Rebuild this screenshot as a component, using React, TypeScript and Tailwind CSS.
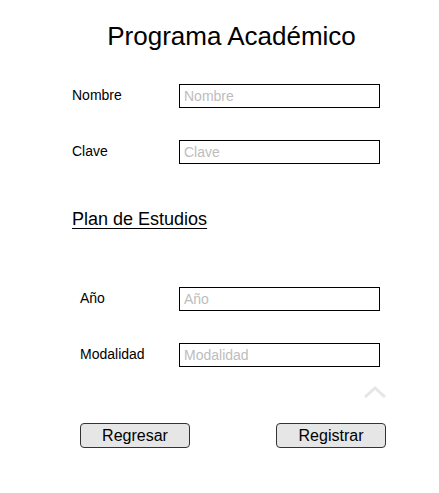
import React from 'react';

const Field = ({ label, indent }: { label: string; indent?: boolean }) => (
  <div className="flex items-start">
    <label className={`w-[107px] text-[14px] leading-4 pt-[3px] text-black ${indent ? 'pl-2' : ''}`}>{label}</label>
    <input
      className="w-[201px] h-[24px] border border-black px-1 text-[14px] outline-none placeholder:text-[#bdbdbd]"
      placeholder={label}
    />
  </div>
);

export default function App() {
  return (
    <div className="w-[439px] h-[493px] bg-white font-['Liberation_Sans',Arial,sans-serif] text-black">
      <h1 className="pt-[21px] text-center text-[26px] leading-[30px] pl-[24px]">Programa Académico</h1>

      <div className="pl-[72px] pt-[33px] flex flex-col">
        <div className="flex flex-col gap-[32px]">
          <Field label="Nombre" />
          <Field label="Clave" />
        </div>

        <h2 className="mt-[44px] text-[18px] leading-[22px] underline underline-offset-[3px] w-fit">Plan de Estudios</h2>

        <div className="mt-[57px] flex flex-col gap-[32px]">
          <Field label="Año" indent />
          <Field label="Modalidad" indent />
        </div>

        <div className="flex justify-end w-[314px] mt-[19px]">
          <svg width="22" height="12" viewBox="0 0 22 12" fill="none">
            <path d="M1 11 L11 2 L21 11" stroke="#e6e6e6" strokeWidth="3" />
          </svg>
        </div>

        <div className="flex justify-between w-[314px] pl-2 mt-[25px]">
          <button className="w-[110px] h-[25px] bg-[#e6e6e6] border border-[#333] rounded-[4px] text-[16px] leading-5">Regresar</button>
          <button className="w-[110px] h-[25px] bg-[#e6e6e6] border border-[#333] rounded-[4px] text-[16px] leading-5">Registrar</button>
        </div>
      </div>
    </div>
  );
}
